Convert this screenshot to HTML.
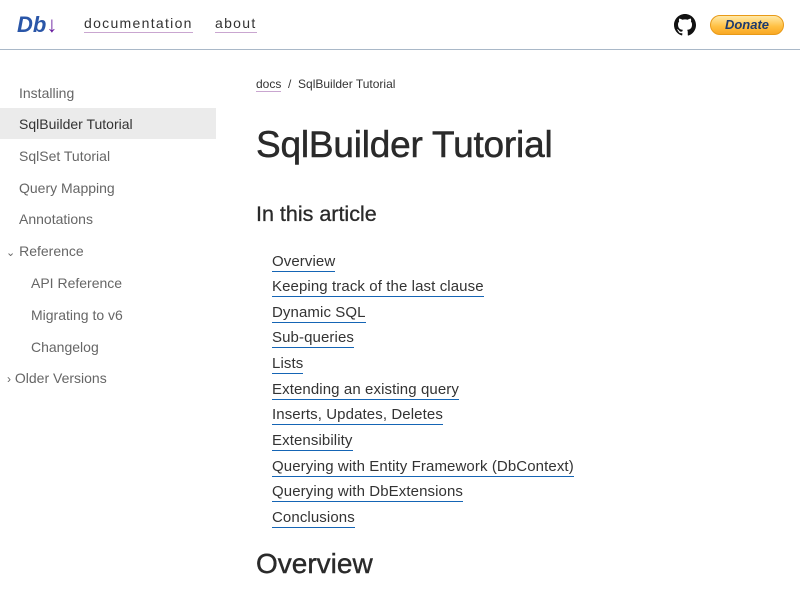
<!DOCTYPE html>
<html><head><meta charset="utf-8"><style>
*{margin:0;padding:0;box-sizing:border-box}
body{width:800px;height:600px;overflow:hidden;background:#fff;font-family:"Liberation Sans",sans-serif;color:#333;position:relative}
.hdr{position:absolute;left:0;top:0;width:800px;height:50px;border-bottom:1px solid #a9b8c8}
.logo{position:absolute;left:17px;top:12px;font-style:italic;font-weight:bold;font-size:22px;color:#2a56a8;font-family:"Liberation Sans",sans-serif}
.nav{position:absolute;top:15px;font-size:14px;letter-spacing:1.3px;color:#333;border-bottom:1px solid #c9a6d0;line-height:17px}
.don{position:absolute;left:710px;top:15px;width:74px;height:20px;border-radius:10px;background:linear-gradient(#ffe9a8,#ffbf40 60%,#f9a825);border:1px solid #e89a18;font-size:13px;font-weight:bold;font-style:italic;color:#1c3a6e;text-align:center;line-height:18px}
.side div{position:absolute;font-size:14px;color:#666;height:31px;line-height:33px;width:216px}
.act{background:#ebebeb;color:#333!important}
.bc{position:absolute;left:256px;top:77px;font-size:12px;color:#333}
.bc span{border-bottom:1px solid #c9a6d0}
h1{position:absolute;left:256px;top:124px;font-size:37px;font-weight:normal;color:#2a2a2a;letter-spacing:-0.2px;-webkit-text-stroke:0.5px #2a2a2a}
h3{position:absolute;left:256px;top:202px;font-size:21.5px;font-weight:normal;color:#2a2a2a;-webkit-text-stroke:0.3px #2a2a2a}
h2{position:absolute;left:256px;top:548px;font-size:28px;font-weight:normal;color:#2a2a2a;-webkit-text-stroke:0.4px #2a2a2a}
.toc a{position:absolute;left:272px;font-size:15px;color:#333;text-decoration:none;border-bottom:1.5px solid #1565b5;line-height:19px;letter-spacing:0.1px}
</style></head><body>
<div class="hdr">
<div class="logo">Db<span style="color:#6a1fa0;font-style:normal">↓</span></div>
<div class="nav" style="left:84px">documentation</div>
<div class="nav" style="left:215px">about</div>
<svg style="position:absolute;left:674px;top:14px" width="22" height="22" viewBox="0 0 16 16"><path fill="#111" d="M8 0C3.58 0 0 3.58 0 8c0 3.54 2.290 6.53 5.47 7.59.4.07.55-.17.55-.38v-1.330c-2.230.48-2.700-1.070-2.700-1.070-.36-.92-.89-1.170-.89-1.170-.73-.5.06-.49.06-.49.8.06 1.230.83 1.230.83.72 1.230 1.880.87 2.340.67.07-.52.28-.87.51-1.070-1.780-.2-3.650-.89-3.650-3.950 0-.87.31-1.590.82-2.150-.08-.2-.36-1.020.08-2.120 0 0 .67-.21 2.200.82a7.600 7.600 0 0 1 4 0c1.530-1.040 2.200-.82 2.200-.82.44 1.100.16 1.920.08 2.120.51.56.82 1.270.82 2.150 0 3.070-1.870 3.750-3.650 3.950.29.25.54.73.54 1.480v2.200c0 .21.15.46.55.38A8.010 8.010 0 0 0 16 8c0-4.420-3.580-8-8-8z"/></svg>
<div class="don">Donate</div>
</div>
<div class="side">
<div style="top:77px;padding-left:19px">Installing</div>
<div class="act" style="top:108px;padding-left:19px">SqlBuilder Tutorial</div>
<div style="top:140px;padding-left:19px">SqlSet Tutorial</div>
<div style="top:172px;padding-left:19px">Query Mapping</div>
<div style="top:203px;padding-left:19px">Annotations</div>
<div style="top:235px;padding-left:6px"><span style="font-size:11px">⌄</span> Reference</div>
<div style="top:267px;padding-left:31px">API Reference</div>
<div style="top:299px;padding-left:31px">Migrating to v6</div>
<div style="top:331px;padding-left:31px">Changelog</div>
<div style="top:362px;padding-left:7px"><span style="font-size:12px">›</span> Older Versions</div>
</div>
<div class="bc"><span>docs</span> &nbsp;/&nbsp; SqlBuilder Tutorial</div>
<h1>SqlBuilder Tutorial</h1>
<h3>In this article</h3>
<div class="toc">
<a style="top:252px">Overview</a>
<a style="top:277px">Keeping track of the last clause</a>
<a style="top:303px">Dynamic SQL</a>
<a style="top:328px">Sub-queries</a>
<a style="top:354px">Lists</a>
<a style="top:380px">Extending an existing query</a>
<a style="top:405px">Inserts, Updates, Deletes</a>
<a style="top:431px">Extensibility</a>
<a style="top:457px">Querying with Entity Framework (DbContext)</a>
<a style="top:482px">Querying with DbExtensions</a>
<a style="top:508px">Conclusions</a>
</div>
<h2>Overview</h2>
</body></html>
